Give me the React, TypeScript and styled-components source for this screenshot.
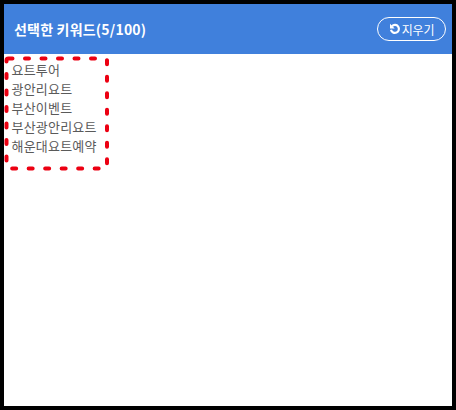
import React from "react";
import styled, { createGlobalStyle } from "styled-components";

const Global = createGlobalStyle`
  html, body { margin: 0; padding: 0; background: #fff; }
  * { box-sizing: border-box; }
`;

const Frame = styled.div`
  position: relative;
  width: 456px;
  height: 410px;
  border: solid #000;
  border-width: 4px;
  background: #fff;
  font-family: "Noto Sans CJK KR", "Open Sans", sans-serif;
  overflow: hidden;
`;

const Header = styled.header`
  height: 50px;
  background: #4080dc;
  display: flex;
  align-items: center;
  justify-content: space-between;
  padding: 0 6px 0 10px;
`;

const Title = styled.h1`
  margin: 0;
  font-size: 14px;
  font-weight: 700;
  color: #fff;
  letter-spacing: 0.2px;
  font-family: "Noto Sans CJK KR", sans-serif;
`;

const ClearButton = styled.button`
  width: 69px;
  height: 24px;
  border: 1px solid #fff;
  border-radius: 12px;
  background: transparent;
  color: #fff;
  display: flex;
  align-items: center;
  justify-content: center;
  gap: 1px;
  padding: 0;
  font: 400 12px "Noto Sans CJK KR", sans-serif;
  letter-spacing: -0.2px;
`;

const List = styled.ul`
  list-style: none;
  margin: 0;
  padding: 6px 0 0 7.5px;
`;

const Item = styled.li`
  height: 19px;
  line-height: 19px;
  font-size: 13px;
  color: #5a5a5a;
  letter-spacing: 0.2px;
`;

const Annotation = styled.svg`
  position: absolute;
  left: 0;
  top: 52px;
  width: 110px;
  height: 118px;
`;

const keywords = ["요트투어", "광안리요트", "부산이벤트", "부산광안리요트", "해운대요트예약"];

export default function App() {
  return (
    <>
      <Global />
      <Frame>
        <Header>
          <Title>선택한 키워드(5/100)</Title>
          <ClearButton>
            <svg width="12" height="12" viewBox="0 0 12 12" fill="none">
              <path d="M3 3.2A4 4 0 1 1 2 6.8" stroke="#fff" strokeWidth="2.2" />
              <path d="M1 .8v4.7h4.7z" fill="#fff" />
            </svg>
            지우기
          </ClearButton>
        </Header>
        <List>
          {keywords.map((k) => (
            <Item key={k}>{k}</Item>
          ))}
        </List>
        <Annotation viewBox="0 0 110 118">
          <rect
            x="2.5"
            y="2.5"
            width="100.5"
            height="110"
            rx="2"
            fill="none"
            stroke="#ec0012"
            strokeWidth="4"
            strokeLinecap="round"
            strokeDasharray="4 12.5"
          />
        </Annotation>
      </Frame>
    </>
  );
}
